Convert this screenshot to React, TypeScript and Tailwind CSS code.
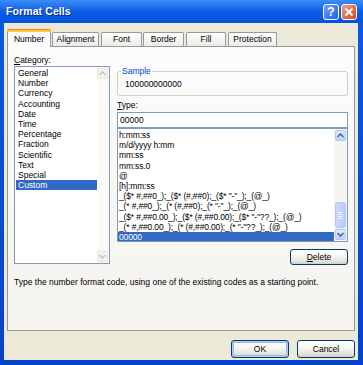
import React from "react";

const font = { fontFamily: '"Liberation Sans", Arial, sans-serif' };

function XPButton({ children, w, h, isDefault }: { children: React.ReactNode; w: string; h: string; isDefault?: boolean }) {
  return (
    <div
      className={`${w} ${h} rounded-[3px] border border-[#003C74] bg-gradient-to-b from-[#FFFFFF] via-[#F5F4EF] to-[#D8D4C8] flex items-center justify-center text-[8.5px] text-black ${
        isDefault ? "shadow-[inset_0_0_0_1px_#B7CDF5,inset_0_0_0_2px_#98B8EA]" : "shadow-[inset_0_-1px_0_#D6D0C5]"
      }`}
    >
      {children}
    </div>
  );
}

const categories = [
  "General",
  "Number",
  "Currency",
  "Accounting",
  "Date",
  "Time",
  "Percentage",
  "Fraction",
  "Scientific",
  "Text",
  "Special",
  "Custom",
];

const types = [
  "h:mm:ss",
  "m/d/yyyy h:mm",
  "mm:ss",
  "mm:ss.0",
  "@",
  "[h]:mm:ss",
  '_($* #,##0_);_($* (#,##0);_($* "-"_);_(@_)',
  '_(* #,##0_);_(* (#,##0);_(* "-"_);_(@_)',
  '_($* #,##0.00_);_($* (#,##0.00);_($* "-"??_);_(@_)',
  '_(* #,##0.00_);_(* (#,##0.00);_(* "-"??_);_(@_)',
  "00000",
];

function Arrow({ up, color }: { up?: boolean; color: string }) {
  return (
    <svg width="7" height="5" viewBox="0 0 7 5">
      {up ? (
        <path d="M0.5 4 L3.5 1 L6.5 4" fill="none" stroke={color} strokeWidth="1.5" />
      ) : (
        <path d="M0.5 1 L3.5 4 L6.5 1" fill="none" stroke={color} strokeWidth="1.5" />
      )}
    </svg>
  );
}

export default function App() {
  return (
    <div
      className="w-[363px] h-[365px] flex flex-col bg-gradient-to-b from-[#0A5BE0] to-[#0443C8] overflow-hidden select-none"
      style={font}
    >
      {/* Title bar */}
      <div className="h-[23px] shrink-0 flex items-center pl-[6px] pr-[6px] bg-gradient-to-b from-[#3C8CF8] via-[#0A5EE6] to-[#0453DA]">
        <span className="text-white font-bold text-[10.5px] tracking-[0.1px] [text-shadow:1px_1px_0_#0A2A8C]">Format Cells</span>
        <div className="ml-auto flex gap-[2px]">
          <div className="w-[16px] h-[16px] rounded-[3px] border border-white bg-gradient-to-br from-[#6FA0F8] to-[#1D5BE0] flex items-center justify-center text-white font-bold text-[12px] leading-none">
            ?
          </div>
          <div className="w-[16px] h-[16px] rounded-[3px] border border-white bg-gradient-to-br from-[#F0A080] to-[#D83A12] flex items-center justify-center">
            <svg width="10" height="10" viewBox="0 0 10 10">
              <path d="M1.5 1.5 L8.5 8.5 M8.5 1.5 L1.5 8.5" stroke="white" strokeWidth="2" />
            </svg>
          </div>
        </div>
      </div>

      {/* Client area */}
      <div className="ml-[4px] mr-[5px] mb-[5px] flex-1 bg-[#ECE9D8] flex flex-col px-[3px]">
        {/* Tabs */}
        <div className="h-[23px] pt-[5px] flex items-end text-[8.5px] text-black relative z-10">
          <div className="w-[44px] h-[18px] -mb-[1px] bg-[#FCFCFE] border border-b-0 border-[#919B9C] rounded-t-[3px] flex flex-col">
            <div className="h-[3px] bg-[#FFC83C] border-t border-[#E68B2C] rounded-t-[2px] -mx-[1px] -mt-[1px]" />
            <div className="flex-1 flex items-center justify-center pb-[1px]">Number</div>
          </div>
          <div className="w-[47px] h-[14px] ml-[1px] bg-gradient-to-b from-white to-[#ECEBE6] border border-b-0 border-[#919B9C] rounded-t-[2px] flex items-center justify-center">
            Alignment
          </div>
          <div className="w-[41px] h-[14px] ml-[2px] bg-gradient-to-b from-white to-[#ECEBE6] border border-b-0 border-[#919B9C] rounded-t-[2px] flex items-center justify-center">
            Font
          </div>
          <div className="w-[41px] h-[14px] ml-[1px] bg-gradient-to-b from-white to-[#ECEBE6] border border-b-0 border-[#919B9C] rounded-t-[2px] flex items-center justify-center">
            Border
          </div>
          <div className="w-[40px] h-[14px] ml-[2px] bg-gradient-to-b from-white to-[#ECEBE6] border border-b-0 border-[#919B9C] rounded-t-[2px] flex items-center justify-center">
            Fill
          </div>
          <div className="w-[49px] h-[14px] ml-[2px] bg-gradient-to-b from-white to-[#ECEBE6] border border-b-0 border-[#919B9C] rounded-t-[2px] flex items-center justify-center">
            Protection
          </div>
        </div>

        {/* Panel */}
        <div className="w-[348px] h-[285px] border border-[#919B9C] bg-gradient-to-b from-[#FCFCFE] to-[#F4F3EE] pl-[6px] pr-[5px] pt-[8px] flex flex-col text-[8.5px] text-black">
          <div className="flex gap-[7px]">
            {/* Left column */}
            <div className="w-[96px] flex flex-col">
              <div className="h-[10px] leading-[10px]">
                <span className="underline">C</span>ategory:
              </div>
              <div className="mt-[1px] h-[198px] border border-[#7F9DB9] bg-white flex">
                <div className="flex-1 pt-[1px] pl-[1px] flex flex-col">
                  {categories.map((c) => (
                    <div
                      key={c}
                      className={`h-[10.2px] leading-[10.2px] pl-[2px] ${c === "Custom" ? "bg-[#316AC5] text-white" : ""}`}
                    >
                      {c}
                    </div>
                  ))}
                </div>
                <div className="w-[12px] flex flex-col bg-[#FAFAF7] pt-[1px] pb-[1px] pr-[1px]">
                  <div className="h-[11px] rounded-[2px] border border-[#E8E6DE] bg-[#F3F2EC] flex items-center justify-center">
                    <Arrow up color="#C9C7BA" />
                  </div>
                  <div className="flex-1" />
                  <div className="h-[11px] rounded-[2px] border border-[#E8E6DE] bg-[#F3F2EC] flex items-center justify-center">
                    <Arrow color="#C9C7BA" />
                  </div>
                </div>
              </div>
            </div>

            {/* Right column */}
            <div className="w-[231px] flex flex-col pt-[16px]">
              <div className="relative h-[25px] border border-[#D0D0BF] rounded-[3px] flex items-center pl-[7px] pt-[2px]">
                <span className="absolute -top-[6px] left-[3px] px-[1px] bg-[#FBFBFC] text-[#0046D5] leading-[10px]">Sample</span>
                <span>100000000000</span>
              </div>
              <div className="mt-[4px] h-[10px] leading-[10px]">
                <span className="underline">T</span>ype:
              </div>
              <div className="mt-[2px] h-[16px] border border-[#7F9DB9] bg-white flex items-center pl-[2px]">00000</div>
              <div className="h-[114px] border border-[#7F9DB9] bg-white flex">
                <div className="flex-1 pt-[1px] flex flex-col overflow-hidden">
                  {types.map((t) => (
                    <div
                      key={t}
                      className={`h-[10.2px] leading-[10.2px] pl-[1px] whitespace-nowrap tracking-[-0.15px] ${
                        t === "00000" ? "bg-[#316AC5] text-white" : ""
                      }`}
                    >
                      {t}
                    </div>
                  ))}
                </div>
                <div className="w-[13px] flex flex-col bg-[#F6F5F0] p-[1px]">
                  <div className="h-[11px] rounded-[2px] border border-[#B4C8F6] bg-gradient-to-b from-[#E1EAFE] to-[#BBCEFB] flex items-center justify-center">
                    <Arrow up color="#4D6185" />
                  </div>
                  <div className="flex-1 flex flex-col justify-end pb-[1px]">
                    <div className="h-[26px] rounded-[2px] border border-[#B4C8F6] bg-gradient-to-r from-[#C9D8FC] to-[#B6CCFA] flex items-center justify-center">
                      <div className="w-[5px] flex flex-col gap-[1px]">
                        <div className="h-[1px] bg-[#EEF4FE]" />
                        <div className="h-[1px] bg-[#EEF4FE]" />
                        <div className="h-[1px] bg-[#EEF4FE]" />
                        <div className="h-[1px] bg-[#EEF4FE]" />
                      </div>
                    </div>
                  </div>
                  <div className="h-[11px] rounded-[2px] border border-[#B4C8F6] bg-gradient-to-b from-[#E1EAFE] to-[#BBCEFB] flex items-center justify-center">
                    <Arrow color="#4D6185" />
                  </div>
                </div>
              </div>
              <div className="mt-[7px] flex justify-end pr-[0px]">
                <XPButton w="w-[58px]" h="h-[16px]">
                  <span>
                    <span className="underline">D</span>elete
                  </span>
                </XPButton>
              </div>
            </div>
          </div>
          <div className="mt-[11px] pl-[0px]">Type the number format code, using one of the existing codes as a starting point.</div>
        </div>

        {/* Bottom buttons */}
        <div className="mt-[9px] flex justify-end gap-[8px] pr-[0px]">
          <XPButton w="w-[58px]" h="h-[18px]" isDefault>
            OK
          </XPButton>
          <XPButton w="w-[58px]" h="h-[18px]">
            Cancel
          </XPButton>
        </div>
      </div>
    </div>
  );
}
